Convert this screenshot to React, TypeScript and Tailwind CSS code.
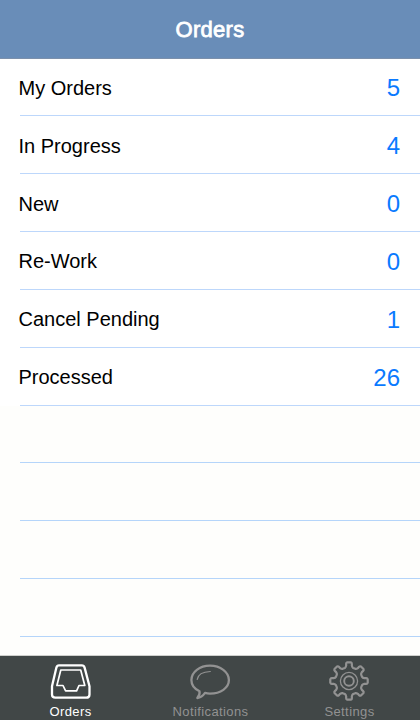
import { useState } from "react";

type TabId = "orders" | "notifications" | "settings";

const rows = [
  { label: "My Orders", count: 5 },
  { label: "In Progress", count: 4 },
  { label: "New", count: 0 },
  { label: "Re-Work", count: 0 },
  { label: "Cancel Pending", count: 1 },
  { label: "Processed", count: 26 },
];

// Outline of the settings gear: eight rounded teeth around a 20,20 centre
const gearPath = (() => {
  const at = (r: number, deg: number) => {
    const a = (deg * Math.PI) / 180;
    return `${(20 + r * Math.sin(a)).toFixed(2)} ${(20 - r * Math.cos(a)).toFixed(2)}`;
  };
  let d = "";
  for (let i = 0; i < 8; i++) {
    const c = i * 45;
    d += `${i === 0 ? "M" : "L"}${at(18.8, c - 5.5)}L${at(18.8, c + 5.5)}Q${at(18.6, c + 9)} ${at(17.4, c + 9.5)}`;
    d += `L${at(15.6, c + 10.5)}Q${at(14, c + 13)} ${at(13.7, c + 17.5)}L${at(13.7, c + 27.5)}Q${at(14, c + 32)} ${at(15.6, c + 34.5)}`;
    d += `L${at(17.4, c + 35.5)}Q${at(18.6, c + 36)} ${at(18.8, c + 39.5)}`;
  }
  return d + "Z";
})();

function InboxIcon() {
  return (
    <svg className="overflow-visible" width="40" height="40" viewBox="0 0 40 40" fill="none" stroke="currentColor" strokeLinejoin="round">
      <path
        d="M9 4.3H31.8Q34 4.3 34.6 6.6L39.5 25.2V33.4Q39.5 36.7 36.2 36.7H5.3Q2 36.7 2 33.4V25.2L6.4 6.6Q7 4.3 9 4.3Z"
        strokeWidth="2.3"
      />
      <path d="M10.8 9H30.7L34.8 24.5H29L26.6 29.8H15.6L13 24.5H6.9Z" strokeWidth="1.7" />
    </svg>
  );
}

function BubbleIcon() {
  return (
    <svg className="overflow-visible" width="40" height="40" viewBox="0 0 40 40" fill="none" stroke="currentColor" strokeLinecap="round" strokeLinejoin="round">
      <path
        d="M9.5 30.3C4.4 28 1.4 23.9 1.4 19.1C1.4 11.1 9.7 4.6 20 4.6S38.9 11.1 38.9 19.1S30.5 32.6 20 32.6C18 32.6 16.7 32.4 15 31.9C12.8 35 10.5 36.7 7.3 37C9.3 34.8 10 32.8 9.5 30.3Z"
        strokeWidth="2.3"
      />
      <path d="M7.2 18.4C8 13.9 13 10.8 20.3 10.5" strokeWidth="1.2" />
    </svg>
  );
}

function GearIcon() {
  return (
    <svg width="40" height="40" viewBox="0 0 40 40" fill="none" stroke="currentColor" strokeLinejoin="round">
      <path d={gearPath} strokeWidth="2.2" />
      <circle cx="20" cy="20" r="8.6" strokeWidth="1.3" />
      <circle cx="20" cy="20" r="4.8" strokeWidth="1.9" />
    </svg>
  );
}

const tabs: { id: TabId; label: string; Icon: () => React.JSX.Element }[] = [
  { id: "orders", label: "Orders", Icon: InboxIcon },
  { id: "notifications", label: "Notifications", Icon: BubbleIcon },
  { id: "settings", label: "Settings", Icon: GearIcon },
];

export default function App() {
  const [active, setActive] = useState<TabId>("orders");

  return (
    <div className="flex h-[720px] w-[420px] flex-col overflow-hidden bg-[#fefefc] font-['Liberation_Sans',Arial,sans-serif]">
      {/* Header */}
      <header className="z-10 flex h-[59px] shrink-0 items-center justify-center border-b border-[#7c90ab] bg-[#698db8] pt-px">
        <h1 className="text-[22px] tracking-[0.3px] text-white [-webkit-text-stroke:0.8px_white]">Orders</h1>
      </header>

      {/* Order groups, followed by the blank ruled lines */}
      <main className="-mt-[0.55px] min-h-0 flex-1 overflow-hidden">
        {rows.map((row) => (
          <div key={row.label} className="h-[57.85px] bg-white pl-5">
            <div className="flex h-full items-center justify-between border-b border-[#bdd7fb] pt-0.5 pr-5">
              <span className="-ml-[1.5px] text-xl text-black">{row.label}</span>
              <span className="pt-px text-2xl text-[#0a7aff]">{row.count}</span>
            </div>
          </div>
        ))}
        {[0, 1, 2, 3].map((n) => (
          <div key={n} className="h-[57.85px] pl-5">
            <div className="h-full border-b border-[#b5d5fa]" />
          </div>
        ))}
      </main>

      {/* Tab bar */}
      <nav className="grid h-[65px] shrink-0 grid-cols-3 border-t border-[#cfd0cd] bg-[#414747]">
        {tabs.map(({ id, label, Icon }) => (
          <button
            key={id}
            className={`flex flex-col items-center pt-[5px] ${active === id ? "text-white" : "text-[#929292]"} ${id === "settings" ? "pr-0.5" : ""}`}
            onClick={() => setActive(id)}
          >
            <Icon />
            <span className="mt-[3px] pl-px text-[13px] leading-4 tracking-[0.4px]">{label}</span>
          </button>
        ))}
      </nav>
    </div>
  );
}
